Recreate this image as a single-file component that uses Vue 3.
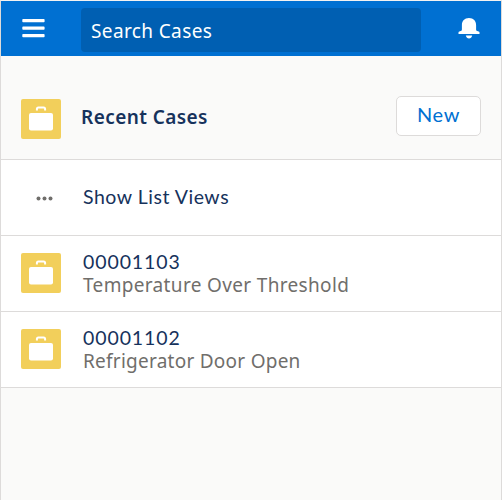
<script setup>
const cases = [
  { number: '00001103', subject: 'Temperature Over Threshold', key: 'temperature' },
  { number: '00001102', subject: 'Refrigerator Door Open', key: 'refrigerator' },
]
</script>

<template>
  <div class="app">
    <header class="topbar">
      <svg class="menu" width="24" height="20" viewBox="0 0 24 20" fill="#fff">
        <rect x="1.300" y="1" width="22.300" height="3.200" rx="0.8" />
        <rect x="1.300" y="8.600" width="22.300" height="3.200" rx="0.8" />
        <rect x="1.300" y="16" width="22.300" height="3.200" rx="0.8" />
      </svg>
      <div class="search"><span class="search-label">Search Cases</span></div>
      <svg class="bell" width="22" height="22" viewBox="0 0 22 22" fill="#fff">
        <path d="M11 1C6.500 1 3.900 4 3.900 8V12.500C3.900 13.500 3.200 14 2 14.200C1 14.400 .5 14.800 .5 15.500V17H21.500V15.500C21.500 14.800 21 14.400 20 14.200C18.800 14 18.100 13.500 18.100 12.500V8C18.100 4 15.500 1 11 1Z" />
        <path d="M7.800 18.500H14.200C13.700 20.500 12.600 21.500 11 21.500C9.400 21.500 8.300 20.500 7.800 18.500Z" />
      </svg>
    </header>
    <section class="heading">
      <svg class="case-icon" width="40" height="40" viewBox="0 0 40 40">
        <rect width="40" height="40" rx="2" fill="#f2cf5b" />
        <path d="M15.900 11.500V10Q15.900 8.500 17.400 8.500H22.600Q24.100 8.500 24.100 10V11.500" fill="none" stroke="#fff" stroke-width="2" />
        <rect x="8" y="14" width="24" height="17.600" rx="2" fill="#fff" />
      </svg>
      <h1 class="title">Recent Cases</h1>
      <button class="new"><span class="new-label">New</span></button>
    </section>
    <div class="row">
      <svg class="dots" width="40" height="40" viewBox="0 0 40 40" fill="#706e6b">
        <circle cx="17.500" cy="20.500" r="2" />
        <circle cx="23.500" cy="20.500" r="2" />
        <circle cx="29.500" cy="20.500" r="2" />
      </svg>
      <span class="views">Show List Views</span>
    </div>
    <div v-for="item in cases" :key="item.number" class="row">
      <svg class="case-icon" width="40" height="40" viewBox="0 0 40 40">
        <rect width="40" height="40" rx="2" fill="#f2cf5b" />
        <path d="M15.900 11.500V10Q15.900 8.500 17.400 8.500H22.600Q24.100 8.500 24.100 10V11.500" fill="none" stroke="#fff" stroke-width="2" />
        <rect x="8" y="14" width="24" height="17.600" rx="2" fill="#fff" />
      </svg>
      <div class="case-text">
        <span class="number">{{ item.number }}</span>
        <span class="subject" :class="item.key">{{ item.subject }}</span>
      </div>
    </div>
  </div>
</template>

<style>
body { background: #fafaf9; }
</style>

<style scoped>
.app {
  box-sizing: border-box;
  width: 502px;
  height: 500px;
  border: 1px solid #dddbda;
  border-top-color: #f3f2f2;
  border-bottom: 0;
  background: #fafaf9;
  color: #16325c;
  font-family: "Noto Sans", sans-serif;
  font-size: 19px;
  line-height: 23px;
  overflow: hidden;
  white-space: nowrap;
}
.topbar {
  display: flex;
  align-items: flex-start;
  height: 55px;
  background: #0070d2;
}
.menu { margin: 17px 0 0 20px; }
.search {
  box-sizing: border-box;
  width: 340px;
  height: 44px;
  margin: 7px 0 0 36px;
  padding: 12px 10px 0;
  border-radius: 4px;
  background: #005fb2;
  color: #fff;
}
.search-label { letter-spacing: 0.38px; }
.bell { margin: 16px 0 0 36.5px; }
.heading {
  box-sizing: border-box;
  display: flex;
  align-items: flex-start;
  height: 104px;
  padding: 43px 20px 0;
  border-bottom: 1px solid #dddbda;
}
.title {
  margin: 7px 0 0 20px;
  font-size: 19px;
  font-weight: 600;
  letter-spacing: 0.42px;
  line-height: 23px;
}
.new {
  box-sizing: border-box;
  width: 85px;
  height: 40px;
  margin: -3px 0 0 auto;
  padding: 0 0 3px;
  border: 1px solid #dddbda;
  border-radius: 5px;
  background: #fff;
  color: #0070d2;
  font: 20px/23px Lato, sans-serif;
}
.new-label { letter-spacing: 0.6px; }
.row {
  box-sizing: border-box;
  display: flex;
  align-items: flex-start;
  height: 76px;
  padding: 17px 20px 0;
  border-bottom: 1px solid #dddbda;
  background: #fff;
}
.dots { margin: 1px 0 0; }
.views {
  margin: 8px 0 0 22px;
  font-family: Lato, sans-serif;
  font-size: 19.5px;
  letter-spacing: 0.52px;
}
.case-text {
  display: flex;
  flex-direction: column;
  margin: -3px 0 0 22px;
}
.number {
  font-family: Lato, sans-serif;
  font-size: 19.5px;
  line-height: 24px;
  letter-spacing: 0.9px;
}
.subject { color: #706e6b; }
.temperature { letter-spacing: 0.34px; }
.refrigerator { letter-spacing: 0.25px; }
</style>
